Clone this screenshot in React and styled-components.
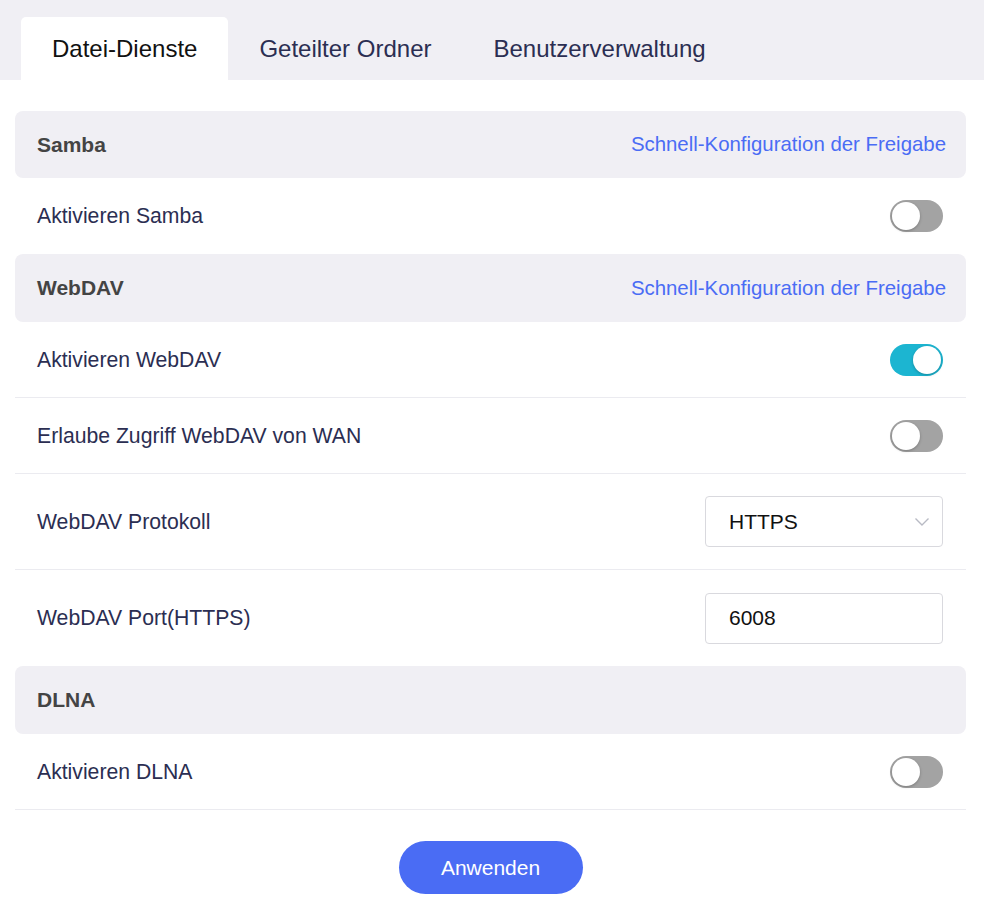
import React, { useState } from 'react';
import styled, { createGlobalStyle } from 'styled-components';

const GlobalStyle = createGlobalStyle`
  body {
    margin: 0;
    background: #ffffff;
    font-family: 'Liberation Sans', Arial, sans-serif;
  }
`;

const Page = styled.div`
  width: 984px;
  min-height: 904px;
  background: #fff;
`;

const TabBar = styled.div`
  display: flex;
  height: 80px;
  padding-left: 21px;
  align-items: flex-end;
  background: #f0eff4;
`;

const Tab = styled.div`
  height: 63px;
  display: flex;
  align-items: center;
  padding: 0 31px;
  box-sizing: border-box;
  font-size: 24px;
  color: ${({ active }) => (active ? '#111' : '#2b2e52')};
  background: ${({ active }) => (active ? '#fff' : 'transparent')};
  border-radius: 5px 5px 0 0;
  cursor: pointer;
`;

const Content = styled.div`
  padding: 31px 18px 0 15px;
`;

const SectionHeader = styled.div`
  height: ${({ short }) => (short ? '67px' : '68px')};
  display: flex;
  align-items: center;
  justify-content: space-between;
  padding: 0 20px 0 22px;
  background: #f0eff4;
  border-radius: 8px;
`;

const SectionTitle = styled.span`
  font-size: 21px;
  font-weight: bold;
  color: #444;
`;

const QuickLink = styled.a`
  font-size: 20.4px;
  color: #4a6cf4;
  text-decoration: none;
  cursor: pointer;
`;

const Row = styled.div`
  height: ${({ tall }) => (tall ? '96px' : '76px')};
  box-sizing: border-box;
  display: flex;
  align-items: center;
  justify-content: space-between;
  padding: 0 23px 0 22px;
  border-bottom: ${({ divider }) => (divider ? '1px solid #ebebf0' : 'none')};
`;

const Label = styled.span`
  font-size: 21.2px;
  color: #2b2e52;
`;

const Track = styled.button`
  position: relative;
  width: 53px;
  height: 32px;
  border: none;
  padding: 0;
  border-radius: 16px;
  background: ${({ on }) => (on ? '#1cb5d1' : '#a3a3a3')};
  cursor: pointer;
`;

const Knob = styled.span`
  position: absolute;
  top: 2px;
  left: ${({ on }) => (on ? '23px' : '2px')};
  width: 28px;
  height: 28px;
  border-radius: 50%;
  background: #fff;
  box-shadow: 0 1px 3px rgba(0, 0, 0, 0.25);
`;

const Field = styled.div`
  width: 238px;
  height: 51px;
  box-sizing: border-box;
  display: flex;
  align-items: center;
  justify-content: space-between;
  padding: 0 12px 0 23px;
  border: 1px solid #d9d9de;
  border-radius: 4px;
  font-size: 21px;
  color: #111;
  background: #fff;
`;

const Footer = styled.div`
  display: flex;
  justify-content: center;
  padding-top: 31px;
`;

const ApplyButton = styled.button`
  width: 184px;
  height: 53px;
  border: none;
  border-radius: 27px;
  background: #4a6cf4;
  color: #fff;
  font-family: inherit;
  font-size: 21px;
  cursor: pointer;
`;

const Toggle = ({ on, onChange }) => (
  <Track on={on ? 1 : 0} onClick={onChange}>
    <Knob on={on ? 1 : 0} />
  </Track>
);

const Chevron = () => (
  <svg width="16" height="10" viewBox="0 0 16 10" fill="none">
    <path d="M1.5 1.5 L8 8 L14.5 1.5" stroke="#b8bac4" strokeWidth="1.4" />
  </svg>
);

export default function App() {
  const [samba, setSamba] = useState(false);
  const [webdav, setWebdav] = useState(true);
  const [wan, setWan] = useState(false);
  const [dlna, setDlna] = useState(false);

  return (
    <Page>
      <GlobalStyle />
      <TabBar>
        <Tab active>Datei-Dienste</Tab>
        <Tab>Geteilter Ordner</Tab>
        <Tab>Benutzerverwaltung</Tab>
      </TabBar>
      <Content>
        <SectionHeader short>
          <SectionTitle>Samba</SectionTitle>
          <QuickLink>Schnell-Konfiguration der Freigabe</QuickLink>
        </SectionHeader>
        <Row>
          <Label>Aktivieren Samba</Label>
          <Toggle on={samba} onChange={() => setSamba(!samba)} />
        </Row>

        <SectionHeader>
          <SectionTitle>WebDAV</SectionTitle>
          <QuickLink>Schnell-Konfiguration der Freigabe</QuickLink>
        </SectionHeader>
        <Row divider>
          <Label>Aktivieren WebDAV</Label>
          <Toggle on={webdav} onChange={() => setWebdav(!webdav)} />
        </Row>
        <Row divider>
          <Label>Erlaube Zugriff WebDAV von WAN</Label>
          <Toggle on={wan} onChange={() => setWan(!wan)} />
        </Row>
        <Row tall divider>
          <Label>WebDAV Protokoll</Label>
          <Field>
            HTTPS
            <Chevron />
          </Field>
        </Row>
        <Row tall>
          <Label>WebDAV Port(HTTPS)</Label>
          <Field>6008</Field>
        </Row>

        <SectionHeader>
          <SectionTitle>DLNA</SectionTitle>
        </SectionHeader>
        <Row divider>
          <Label>Aktivieren DLNA</Label>
          <Toggle on={dlna} onChange={() => setDlna(!dlna)} />
        </Row>

        <Footer>
          <ApplyButton>Anwenden</ApplyButton>
        </Footer>
      </Content>
    </Page>
  );
}
